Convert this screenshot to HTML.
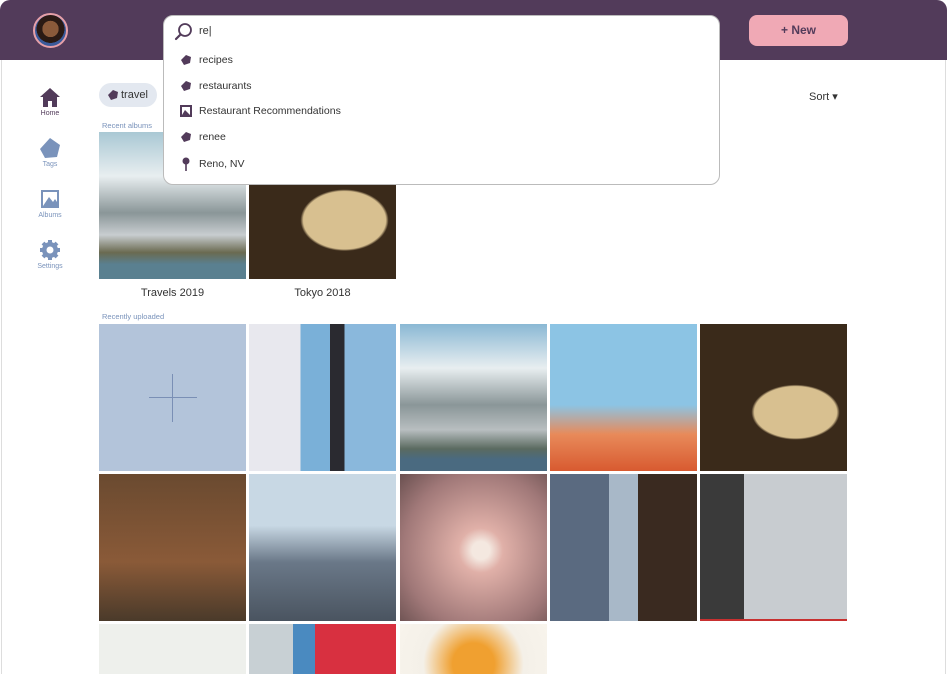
<!DOCTYPE html>
<html><head><meta charset="utf-8"><style>
*{margin:0;padding:0;box-sizing:border-box}
html,body{width:947px;height:674px;overflow:hidden}
body{background:#fff;font-family:"Liberation Sans",sans-serif;position:relative}
.frame{position:absolute;left:1px;top:1px;width:945px;height:673px;border:1px solid #ddd;border-bottom:none;border-radius:10px 10px 0 0}
.hdr{position:absolute;left:0;top:0;width:947px;height:60px;background:#523b5a;border-radius:10px 10px 0 0}
.av{position:absolute;left:33px;top:13px;width:35px;height:35px;border-radius:50%;background:radial-gradient(circle at 50% 45%,#8a5a3a 0 35%,#2a1a14 36% 60%,#3a5a9a 61%);border:2px solid #e6a0a8}
.new{position:absolute;left:749px;top:15px;width:99px;height:31px;background:#f0a9b5;border-radius:8px;color:#523b5a;font-weight:bold;font-size:12px;text-align:center;line-height:31px}
.dd{position:absolute;left:163px;top:15px;width:557px;height:170px;background:#fff;border:1px solid #bbb;border-radius:10px;z-index:5}
.dd .q{position:absolute;left:35px;top:9px;font-size:11px;color:#333}
.it{position:absolute;left:16px;font-size:10.5px;color:#333;display:flex;align-items:center}
.it svg{margin-right:7px}
.nav{position:absolute;left:28px;width:44px;text-align:center;font-size:7px;color:#7a93bb}
.pill{position:absolute;left:99px;top:83px;width:58px;height:24px;background:#e3e8f0;border-radius:12px;font-size:11px;color:#333;line-height:24px;padding-left:22px}
.lbl{position:absolute;left:102px;font-size:7.5px;color:#7a93bb}
.ph{position:absolute;width:147px;height:147px}
.b{height:50px}
.cap{position:absolute;font-size:11px;color:#333;width:147px;text-align:center}
</style></head><body>
<div class="frame"></div>
<div class="hdr"></div>
<div class="av"></div>
<div class="new">+ New</div>
<div class="dd">
<svg style="position:absolute;left:10px;top:6px" width="20" height="20" viewBox="0 0 20 20"><circle cx="11" cy="8" r="6" fill="none" stroke="#523b5a" stroke-width="1.8"/><line x1="6.5" y1="12.5" x2="2" y2="17" stroke="#523b5a" stroke-width="2.2" stroke-linecap="round"/></svg>
<div class="q">re|</div>
<div class="it" style="top:38px"><svg width="12" height="12" viewBox="0 0 12 12"><path d="M1 6 L6 1 L11 3 L10 9 L4 11 Z" fill="#523b5a"/></svg>recipes</div>
<div class="it" style="top:64px"><svg width="12" height="12" viewBox="0 0 12 12"><path d="M1 6 L6 1 L11 3 L10 9 L4 11 Z" fill="#523b5a"/></svg>restaurants</div>
<div class="it" style="top:89px"><svg width="12" height="12" viewBox="0 0 12 12"><rect x="0" y="0" width="12" height="12" fill="#523b5a"/><rect x="2" y="2" width="8" height="8" fill="#fff"/><path d="M2 10 L5 5 L10 10Z" fill="#523b5a"/></svg>Restaurant Recommendations</div>
<div class="it" style="top:115px"><svg width="12" height="12" viewBox="0 0 12 12"><path d="M1 6 L6 1 L11 3 L10 9 L4 11 Z" fill="#523b5a"/></svg>renee</div>
<div class="it" style="top:141px"><svg width="12" height="14" viewBox="0 0 12 14"><circle cx="6" cy="4" r="3.5" fill="#523b5a"/><rect x="5.2" y="6" width="1.6" height="8" fill="#523b5a"/></svg>Reno, NV</div>
</div>
<div class="nav" style="top:86px"><svg width="22" height="22" viewBox="0 0 22 22"><path d="M11 2 L21 11 H18 V21 H13 V15 H9 V21 H4 V11 H1 Z" fill="#523b5a"/></svg><div style="color:#523b5a">Home</div></div>
<div class="nav" style="top:137px"><svg width="22" height="22" viewBox="0 0 22 22"><path d="M1 12 L11 1 L21 8 L18 20 L6 21 Z" fill="#7a93bb"/></svg><div>Tags</div></div>
<div class="nav" style="top:188px"><svg width="22" height="22" viewBox="0 0 22 22"><rect x="2" y="2" width="18" height="18" fill="#7a93bb"/><rect x="4" y="4" width="14" height="14" fill="#fff"/><path d="M4 18 L10 9 L14 14 L16 11 L18 14 V18Z" fill="#7a93bb"/></svg><div>Albums</div></div>
<div class="nav" style="top:239px"><svg width="22" height="22" viewBox="0 0 22 22"><circle cx="11" cy="11" r="8" fill="#7a93bb"/><g stroke="#7a93bb" stroke-width="4"><line x1="11" y1="1" x2="11" y2="21"/><line x1="1" y1="11" x2="21" y2="11"/><line x1="4" y1="4" x2="18" y2="18"/><line x1="18" y1="4" x2="4" y2="18"/></g><circle cx="11" cy="11" r="3.5" fill="#fff"/></svg><div>Settings</div></div>
<div class="pill">travel</div>
<svg style="position:absolute;left:107px;top:89px" width="12" height="12" viewBox="0 0 12 12"><path d="M1 6 L6 1 L11 3 L10 9 L4 11 Z" fill="#523b5a"/></svg>
<div style="position:absolute;left:809px;top:90px;font-size:11px;color:#333">Sort ▾</div>
<div class="lbl" style="top:121px">Recent albums</div>
<div class="ph" style="left:99px;top:132px;background:linear-gradient(180deg,#a9c8d4 0%,#e8eef0 30%,#8a9698 55%,#c8cdd0 70%,#6a6a50 82%,#5a8090 90%)"></div>
<div class="ph" style="left:249px;top:132px;background:radial-gradient(ellipse 40% 28% at 65% 60%,#d8c090 0 70%,#3a2a1a 75%),#2a1c14"></div>
<div class="cap" style="left:99px;top:287px">Travels 2019</div>
<div class="cap" style="left:249px;top:287px">Tokyo 2018</div>
<div class="lbl" style="top:312px">Recently uploaded</div>
<div class="ph" style="left:99px;top:324px;background:#b3c4da"><div style="position:absolute;left:73px;top:50px;width:1px;height:48px;background:#7a8fb5"></div><div style="position:absolute;left:50px;top:73px;width:48px;height:1px;background:#7a8fb5"></div></div>
<div class="ph" style="left:249px;top:324px;background:linear-gradient(90deg,#e8e8ee 0 35%,#7ab0d8 35% 55%,#2a2a30 55% 65%,#8ab8dc 65%)"></div>
<div class="ph" style="left:400px;top:324px;background:linear-gradient(180deg,#8ab8d4 0%,#e8eef0 30%,#8a9698 55%,#b8bec0 72%,#5a6a60 85%,#4a6a80 92%)"></div>
<div class="ph" style="left:550px;top:324px;background:linear-gradient(180deg,#8cc4e4 0 55%,#e88a5a 75%,#d85a30 100%)"></div>
<div class="ph" style="left:700px;top:324px;background:radial-gradient(ellipse 40% 25% at 65% 60%,#d8c090 0 70%,#3a2a1a 75%),#2a1c14"></div>
<div class="ph" style="left:99px;top:474px;background:linear-gradient(180deg,#6a4a30,#8a5a38 60%,#4a3a2a)"></div>
<div class="ph" style="left:249px;top:474px;background:linear-gradient(180deg,#c8d8e4 0 35%,#6a7888 60%,#4a5460)"></div>
<div class="ph" style="left:400px;top:474px;background:radial-gradient(circle at 55% 52%,#f4e8e0 0 8%,#e0b0a8 20%,#a07878 70%,#6a5050)"></div>
<div class="ph" style="left:550px;top:474px;background:linear-gradient(90deg,#5a6a80 0 40%,#a8b8c8 40% 60%,#3a2a20 60%)"></div>
<div class="ph" style="left:700px;top:474px;background:linear-gradient(90deg,#3a3a3a 0 30%,#c8ccd0 30%);border-bottom:2px solid #c83030"></div>
<div class="ph b" style="left:99px;top:624px;background:#eef0ec"></div>
<div class="ph b" style="left:249px;top:624px;background:linear-gradient(90deg,#c8d0d4 0 30%,#4a8ac0 30% 45%,#d83040 45%)"></div>
<div class="ph b" style="left:400px;top:624px;background:radial-gradient(circle at 50% 80%,#f0a030 0 25%,#f4f0e8 60%,#f8f4ec)"></div>
</body></html>
